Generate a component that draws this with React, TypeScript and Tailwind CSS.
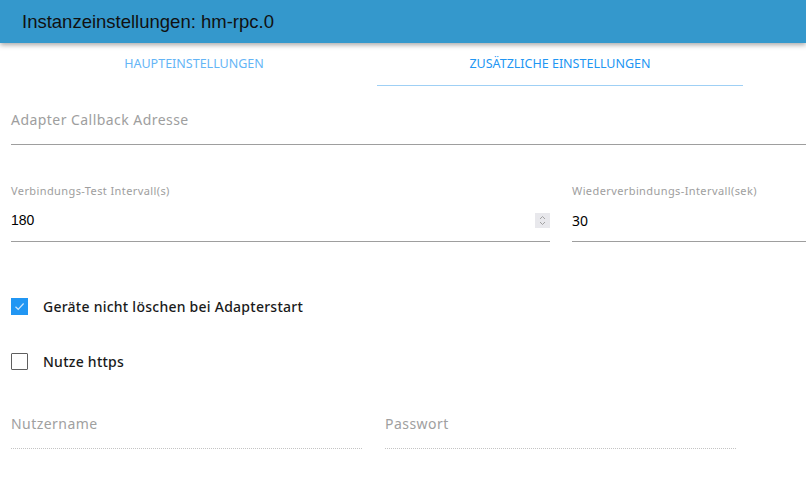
import { useState } from 'react';

const sans = "font-['Noto_Sans',sans-serif]";

function CheckRow({ checked, label, onToggle }: { checked: boolean; label: string; onToggle: () => void }) {
  return (
    <label className="flex items-center h-[18px] cursor-pointer" onClick={onToggle}>
      {checked ? (
        <span className="w-[17px] h-[17px] bg-[#2196f3] flex items-center justify-center">
          <svg width="11" height="9" viewBox="0 0 11 9" fill="none">
            <path d="M1.5 4.8 L4.2 7.3 L9.6 1.5" stroke="#cfe6fb" strokeWidth="1.2" />
          </svg>
        </span>
      ) : (
        <span className="w-[17px] h-[17px] border border-[#5f5f5f] rounded-[1px] bg-white" />
      )}
      <span className={`ml-[15px] text-[14px] text-[#1a1a1a] font-medium tracking-[0.25px] ${sans}`}>{label}</span>
    </label>
  );
}

export default function App() {
  const [tab, setTab] = useState(1);
  const [keepDevices, setKeepDevices] = useState(true);
  const [https, setHttps] = useState(false);

  return (
    <div className="w-[806px] h-[478px] bg-white overflow-hidden">
      <div className="h-[43px] bg-[#3498cc] shadow-[0_2px_5px_rgba(0,0,0,0.35)] flex items-center pl-[22px] relative z-10">
        <h1 className="text-[18.5px] text-[#111] font-['Liberation_Sans',Arial,sans-serif]">Instanzeinstellungen: hm-rpc.0</h1>
      </div>

      <div className="flex pl-[11px]">
        {['HAUPTEINSTELLUNGEN', 'ZUSÄTZLICHE EINSTELLUNGEN'].map((t, i) => (
          <button
            key={t}
            onClick={() => setTab(i)}
            className={`w-[366px] h-[43px] pt-[1px] text-[12.5px] ${sans} ${i === tab ? 'text-[#2196f3] border-b border-[#9fd0f5]' : 'text-[#64b5f6] border-b border-transparent'}`}
          >
            {t}
          </button>
        ))}
      </div>

      <div className="pl-[11px]">
        <div className="h-[59px] flex flex-col justify-end border-b border-[#9e9e9e]">
          <span className={`text-[14px] text-[#9e9e9e] tracking-[0.45px] mb-[14px] ${sans}`}>Adapter Callback Adresse</span>
        </div>

        <div className="flex gap-[22px] mt-[38px]">
          <div className="w-[539px] border-b border-[#9e9e9e]">
            <div className={`text-[11px] text-[#9e9e9e] tracking-[0.4px] ${sans}`}>Verbindungs-Test Intervall(s)</div>
            <div className="flex items-center justify-between h-[30px] mt-[7px] pb-[3px] mb-[4px]">
              <span className="text-[14px] text-black font-['Liberation_Sans',Arial,sans-serif]">180</span>
              <span className="w-[15px] h-[15px] bg-[#e8e8ec] flex flex-col items-center justify-center">
                <svg width="7" height="11" viewBox="0 0 7 11" fill="none" stroke="#9a9a9a" strokeWidth="0.9">
                  <path d="M1 4 L3.5 1.5 L6 4" />
                  <path d="M1 7 L3.5 9.5 L6 7" />
                </svg>
              </span>
            </div>
          </div>
          <div className="flex-1 border-b border-[#9e9e9e]">
            <div className={`text-[11px] text-[#9e9e9e] tracking-[0.4px] ${sans}`}>Wiederverbindungs-Intervall(sek)</div>
            <div className="flex items-center h-[30px] mt-[7px] pb-[3px] mb-[4px]">
              <span className={`text-[14px] text-black ${sans}`}>30</span>
            </div>
          </div>
        </div>

        <div className="mt-[56px] flex flex-col gap-[37px]">
          <CheckRow checked={keepDevices} label="Geräte nicht löschen bei Adapterstart" onToggle={() => setKeepDevices(!keepDevices)} />
          <CheckRow checked={https} label="Nutze https" onToggle={() => setHttps(!https)} />
        </div>

        <div className="flex gap-[23px] mt-[40px]">
          <div className="w-[351px] h-[38px] flex flex-col justify-end border-b border-dotted border-[#c4c4c4]">
            <span className={`text-[14px] text-[#a0a0a0] tracking-[0.45px] mb-[14px] ${sans}`}>Nutzername</span>
          </div>
          <div className="w-[351px] h-[38px] flex flex-col justify-end border-b border-dotted border-[#c4c4c4]">
            <span className={`text-[14px] text-[#a0a0a0] tracking-[0.45px] mb-[14px] ${sans}`}>Passwort</span>
          </div>
        </div>
      </div>
    </div>
  );
}
